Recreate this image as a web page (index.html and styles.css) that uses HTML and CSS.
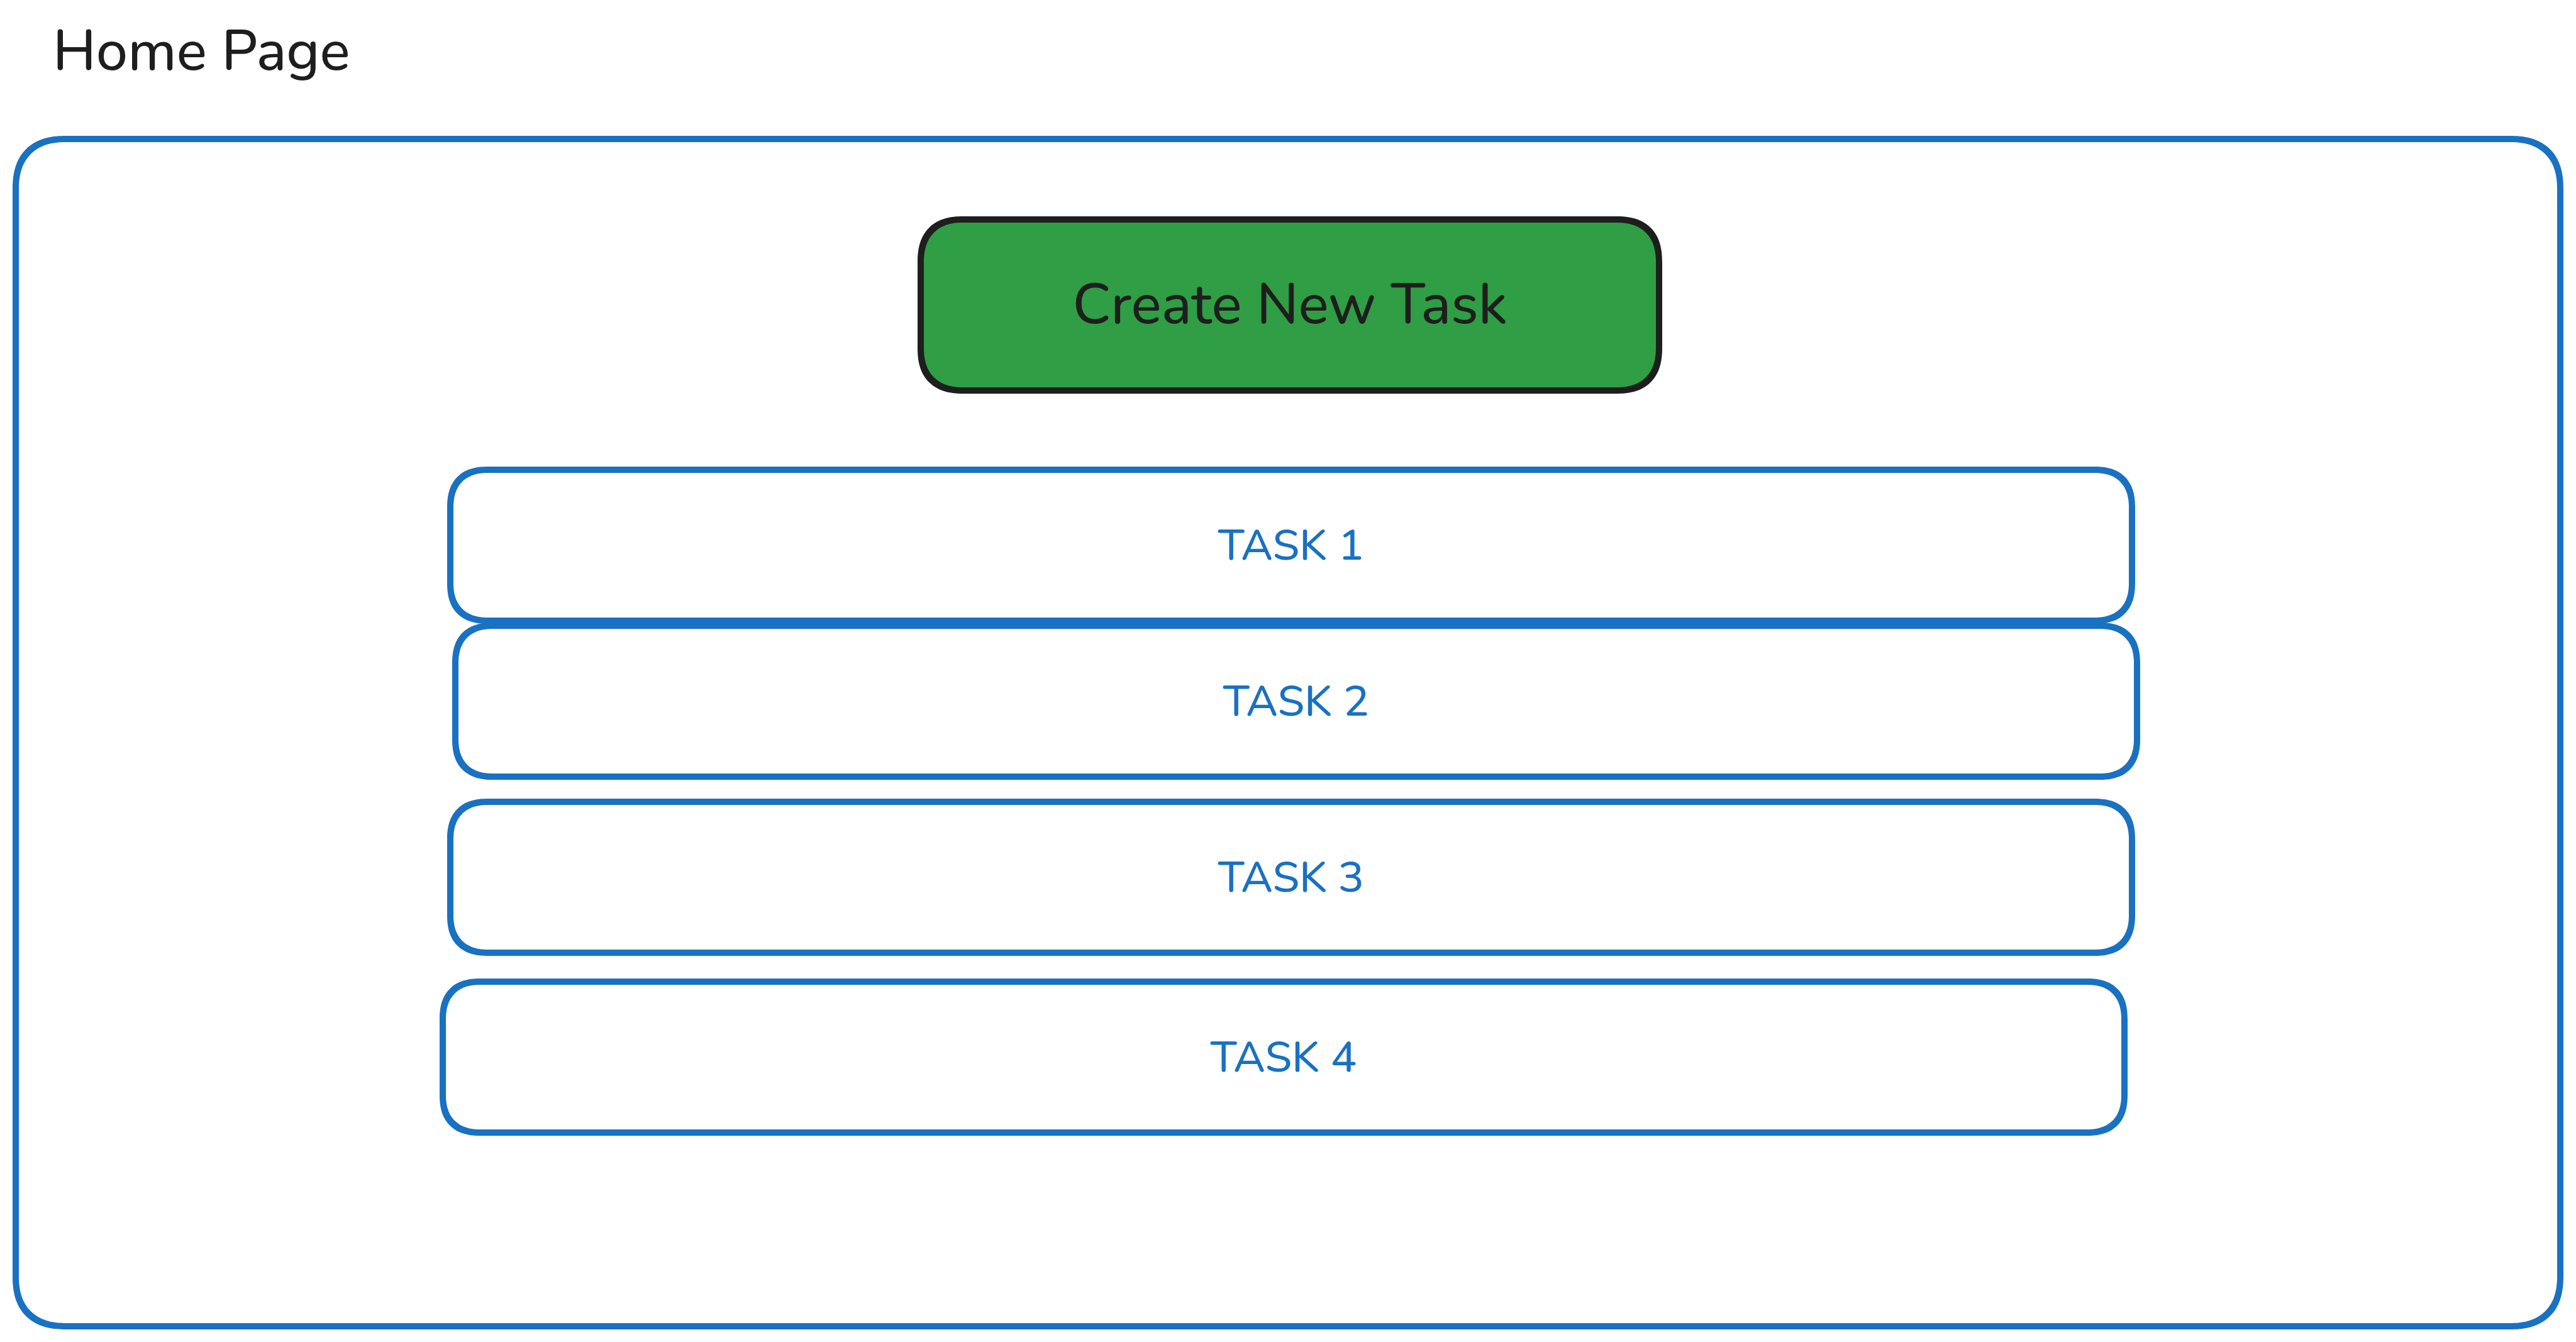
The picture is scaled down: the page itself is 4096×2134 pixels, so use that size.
FILE: index.html
```html
<!DOCTYPE html>
<html lang="en">
<head>
  <meta charset="utf-8">
  <meta name="viewport" content="width=device-width, initial-scale=1">
  <title>Home Page</title>
  <link rel="stylesheet" href="styles.css">
</head>
<body class="page">
  <header class="page-header">
    <h1 class="page-title">Home Page</h1>
  </header>
  <main class="panel">
    <button class="create-button" type="button">Create New Task</button>
    <ul class="task-list">
      <li class="task task-indent">TASK 1</li>
      <li class="task task-indent-more task-touching">TASK 2</li>
      <li class="task task-indent task-spaced">TASK 3</li>
      <li class="task task-spaced-more">TASK 4</li>
    </ul>
  </main>
</body>
</html>
```

FILE: styles.css
```css
:root {
  --ink: #1e1e1e;
  --blue: #1971c2;
  --green: #2f9e44;
  --stroke: 10px;
  --text-large: 90px;
  --text-medium: 69px;
}

* {
  box-sizing: border-box;
}

.page {
  display: flex;
  flex-direction: column;
  min-height: 100vh;
  margin: 0;
  padding: 20px;
  background: #ffffff;
  color: var(--ink);
  font-family: Nunito, Lato, sans-serif;
  font-weight: 500;
}

.page-header {
  padding: 2px 64px 74px;
}

.page-title {
  margin: 0;
  font-size: var(--text-large);
  font-weight: inherit;
  line-height: 120px;
}

.panel,
.create-button,
.task {
  border: var(--stroke) solid var(--blue);
  corner-shape: superellipse(1.27);
}

.panel {
  display: flex;
  flex: 1;
  flex-direction: column;
  align-items: center;
  gap: 116px;
  padding: 118px 0 118px 6px;
  border-radius: 85px;
}

.create-button {
  width: 29.4%;
  height: 282px;
  padding: 0;
  border-color: var(--ink);
  border-radius: 73px;
  background: var(--green);
  color: inherit;
  font: inherit;
  font-size: var(--text-large);
  line-height: 120px;
  white-space: nowrap;
}

.task-list {
  width: 67.1%;
  margin: 0;
  padding: 0;
  list-style: none;
}

.task {
  display: flex;
  align-items: center;
  justify-content: center;
  width: calc(100% - 20px);
  height: 250px;
  border-radius: 65px;
  color: var(--blue);
  font-size: var(--text-medium);
  line-height: 90px;
}

/* The cards are staggered, each with its own indent and spacing step. */
.task-indent {
  margin-left: 12px;
}

.task-indent-more {
  margin-left: 20px;
}

.task-touching {
  margin-top: -2px;
}

.task-spaced {
  margin-top: 30px;
}

.task-spaced-more {
  margin-top: 36px;
}
```
